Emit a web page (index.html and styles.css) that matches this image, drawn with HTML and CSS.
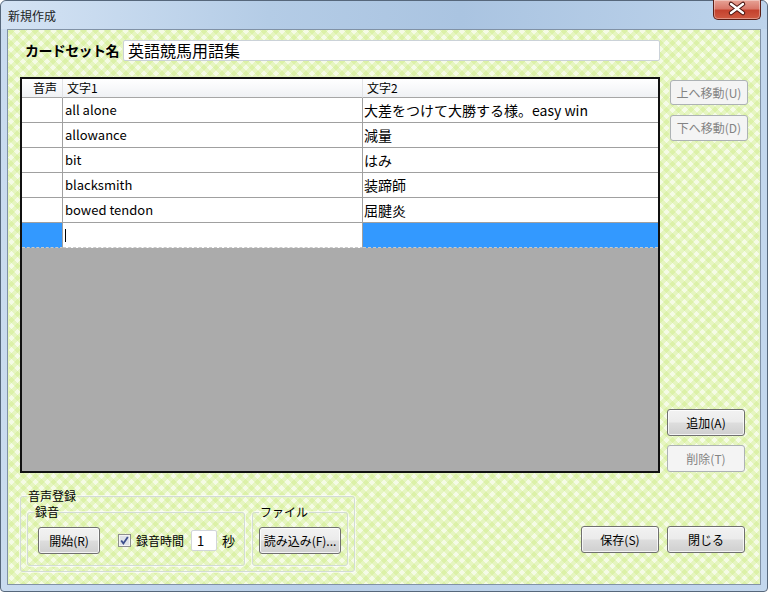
FILE: index.html
```html
<!DOCTYPE html>
<html lang="ja">
<head>
<meta charset="utf-8">
<title>新規作成</title>
<link rel="stylesheet" href="styles.css">
</head>
<body>
<div class="window">
  <div class="titlebar">
    <span class="title">新規作成</span>
    <div class="close">
      <svg width="48" height="20" viewBox="0 0 48 20">
        <path d="M18 5 L30 14 M30 5 L18 14" stroke="#4a1410" stroke-width="4.5" stroke-linecap="round" fill="none"/>
        <path d="M18 5 L30 14 M30 5 L18 14" stroke="#ffffff" stroke-width="2.4" stroke-linecap="round" fill="none"/>
      </svg>
    </div>
  </div>
  <div class="client">
    <div class="name-row">
      <span class="name-label">カードセット名</span>
      <div class="textbox">英語競馬用語集</div>
    </div>
    <div class="main">
      <div class="grid">
        <div class="row head">
          <div class="cell c1">音声</div>
          <div class="cell c2">文字1</div>
          <div class="cell c3">文字2</div>
        </div>
        <div class="row">
          <div class="cell c1"></div>
          <div class="cell c2">all alone</div>
          <div class="cell c3">大差をつけて大勝する様。easy win</div>
        </div>
        <div class="row">
          <div class="cell c1"></div>
          <div class="cell c2">allowance</div>
          <div class="cell c3">減量</div>
        </div>
        <div class="row">
          <div class="cell c1"></div>
          <div class="cell c2">bit</div>
          <div class="cell c3">はみ</div>
        </div>
        <div class="row">
          <div class="cell c1"></div>
          <div class="cell c2">blacksmith</div>
          <div class="cell c3">装蹄師</div>
        </div>
        <div class="row">
          <div class="cell c1"></div>
          <div class="cell c2">bowed tendon</div>
          <div class="cell c3">屈腱炎</div>
        </div>
        <div class="row new">
          <div class="cell c1 sel"></div>
          <div class="cell c2 edit"><span class="caret"></span></div>
          <div class="cell c3 sel"></div>
        </div>
      </div>
      <div class="side">
        <button class="btn disabled up">上へ移動(U)</button>
        <button class="btn disabled down">下へ移動(D)</button>
        <div class="spacer"></div>
        <button class="btn add">追加(A)</button>
        <button class="btn disabled del">削除(T)</button>
      </div>
    </div>
    <div class="bottom">
      <fieldset class="group outer">
        <legend>音声登録</legend>
        <div class="groups">
          <fieldset class="group rec">
            <legend>録音</legend>
            <div class="rec-row">
              <button class="btn start">開始(R)</button>
              <span class="check">
                <svg width="13" height="13" viewBox="0 0 13 13">
                  <rect x="0.5" y="0.5" width="12" height="12" fill="#f4f4f4" stroke="#8e8f8f"/>
                  <rect x="2" y="2" width="9" height="9" fill="#dfe3e8"/>
                  <path d="M3.2 6.5 L5.4 9.4 L9.8 3" stroke="#3c4f8c" stroke-width="1.8" fill="none"/>
                </svg>
              </span>
              <span class="check-label">録音時間</span>
              <div class="secbox">1</div>
              <span class="unit">秒</span>
            </div>
          </fieldset>
          <fieldset class="group file">
            <legend>ファイル</legend>
            <div class="file-row">
              <button class="btn load">読み込み(F)...</button>
            </div>
          </fieldset>
        </div>
      </fieldset>
      <div class="actions">
        <button class="btn save">保存(S)</button>
        <button class="btn closebtn">閉じる</button>
      </div>
    </div>
  </div>
</div>
</body>
</html>
```
FILE: styles.css
```css
* { box-sizing: border-box; }
html, body { margin: 0; padding: 0; }
body {
  width: 768px;
  height: 592px;
  overflow: hidden;
  font-family: "Noto Sans CJK JP", "Noto Sans", sans-serif;
  font-size: 12px;
  color: #000;
  background: #ffffff;
}
.window {
  width: 768px;
  height: 592px;
  display: flex;
  flex-direction: column;
  background: linear-gradient(to right, #c9dbef 0%, #b9cfe8 40%, #c3d7ed 100%);
  border: 1px solid #56677b;
  border-radius: 6px 6px 4px 4px;
  padding: 0 6px 6px 6px;
}
.titlebar {
  height: 28px;
  flex: none;
  display: flex;
  align-items: flex-start;
  justify-content: space-between;
  background: linear-gradient(to right, #d4e3f4 0%, #b4cce6 35%, #aac4e1 60%, #bdd3eb 100%);
  margin: 0 -6px;
  padding: 0 6px 0 7px;
  border-radius: 6px 6px 0 0;
}
.title {
  font-size: 12px;
  line-height: 14px;
  margin-top: 8px;
  color: #1c1c1c;
}
.close {
  width: 48px;
  height: 20px;
  margin-top: -1px;
  border: 1px solid #5b1e16;
  border-top: none;
  border-radius: 0 0 5px 5px;
  background: linear-gradient(to bottom, #e7a396 0%, #d9786a 45%, #c4422e 55%, #cf5a42 100%);
  box-shadow: inset 0 0 0 1px rgba(255,255,255,0.35);
}
.close svg { display: block; margin: -1px 0 0 -1px; }
.client {
  flex: 1;
  border: 1px solid #8192a6;
  background-color: #f5fbe6;
  background-image:
    repeating-linear-gradient(45deg, rgba(200, 234, 120, 0.34) 0 4.25px, transparent 4.25px 8.5px),
    repeating-linear-gradient(-45deg, rgba(200, 234, 120, 0.34) 0 4.25px, transparent 4.25px 8.5px);
  padding: 10px 0 0 12px;
  display: flex;
  flex-direction: column;
}
.name-row {
  display: flex;
  align-items: center;
  height: 21px;
  padding-left: 5px;
}
.name-label {
  width: 98px;
  font-size: 14px;
  font-weight: bold;
  letter-spacing: -0.6px;
  line-height: 21px;
}
.textbox {
  width: 537px;
  height: 21px;
  background: #fff;
  border: 1px solid #cbd2d8;
  border-radius: 2px;
  font-size: 16px;
  line-height: 19px;
  padding-left: 4px;
}
.main {
  display: flex;
  margin-top: 16px;
}
.grid {
  width: 640px;
  height: 396px;
  border: 2px solid #111;
  background: #ababab;
  flex: none;
}
.row {
  display: flex;
  height: 25px;
  background: #fff;
}
.cell {
  border-right: 1px solid #a0a0a0;
  border-bottom: 1px solid #a0a0a0;
  font-size: 13px;
  line-height: 24px;
  white-space: nowrap;
  overflow: hidden;
}
.c1 { width: 41px; }
.c2 { width: 300px; padding-left: 2px; }
.c3 { width: 295px; border-right: none; padding-left: 1px; font-size: 14px; }
.row.head {
  height: 19px;
  background: linear-gradient(to bottom, #ffffff 0%, #f7f8fa 50%, #eef0f3 100%);
}
.head .cell {
  font-size: 12px;
  line-height: 17px;
  border-right-color: #e2e3e6;
  border-bottom-color: #a6a6a6;
}
.head .c1 { padding-left: 11px; }
.head .c2 { padding-left: 4px; }
.head .c3 { padding-left: 4px; }
.row.new { height: 25px; }
.new .cell { border-bottom: 1px dashed #c9c9c9; }
.sel { background: #3399ff; }
.c1.sel { border-right-color: #a0a0a0; }
.edit { position: relative; background: #fff; }
.caret {
  position: absolute;
  left: 2px;
  top: 6px;
  width: 1px;
  height: 13px;
  background: #000;
}
.side {
  width: 81px;
  margin-left: 7px;
  display: flex;
  flex-direction: column;
  align-items: flex-start;
}
.spacer { flex: 1; }
.btn {
  font-family: "Noto Sans CJK JP", "Noto Sans", sans-serif;
  font-size: 12px;
  line-height: 14px;
  color: #000;
  padding: 0;
  border: 1px solid #707070;
  border-radius: 3px;
  background: linear-gradient(to bottom, #f2f2f2 0%, #ebebeb 48%, #dddddd 52%, #cfcfcf 100%);
  box-shadow: inset 0 0 0 1px rgba(255,255,255,0.75);
  width: 78px;
  height: 27px;
}
.btn.disabled {
  border-color: #adb2b5;
  background: #f4f4f4;
  color: #838383;
  box-shadow: none;
}
.up { margin-left: 3px; margin-top: 3px; height: 25px; }
.down { margin-left: 3px; margin-top: 10px; height: 26px; }
.add { height: 27px; }
.del { margin-top: 9px; height: 27px; margin-bottom: 1px; }
.bottom {
  display: flex;
  align-items: flex-start;
  margin-top: 16px;
}
.group {
  margin: 0;
  border: 1px solid #d3dbd7;
  border-radius: 3px;
  box-shadow: 0 0 0 1px rgba(255,255,255,0.6);
  padding: 0 6px;
  min-width: 0;
}
.group legend {
  padding: 0 1px;
  font-size: 12px;
  line-height: 14px;
}
.outer {
  width: 335px;
  height: 83px;
  padding-bottom: 5px;
}
.groups {
  display: flex;
  gap: 7px;
  margin-top: 2px;
}
.rec { width: 218px; height: 61px; }
.file { width: 96px; height: 61px; }
.rec-row {
  display: flex;
  align-items: center;
  margin-top: 8px;
  padding-left: 4px;
}
.start { width: 62px; }
.check { margin-left: 18px; width: 13px; height: 13px; }
.check svg { display: block; }
.check-label { margin-left: 5px; font-size: 12px; line-height: 16px; }
.secbox {
  margin-left: 7px;
  width: 26px;
  height: 21px;
  background: #fff;
  border: 1px solid #d2d6da;
  border-radius: 2px;
  font-size: 13px;
  line-height: 19px;
  padding-left: 5px;
}
.unit { margin-left: 5px; font-size: 13px; }
.file-row { margin-top: 8px; }
.load { width: 82px; }
.actions {
  margin-left: auto;
  margin-right: 15px;
  margin-top: 37px;
  display: flex;
  gap: 8px;
}
```
